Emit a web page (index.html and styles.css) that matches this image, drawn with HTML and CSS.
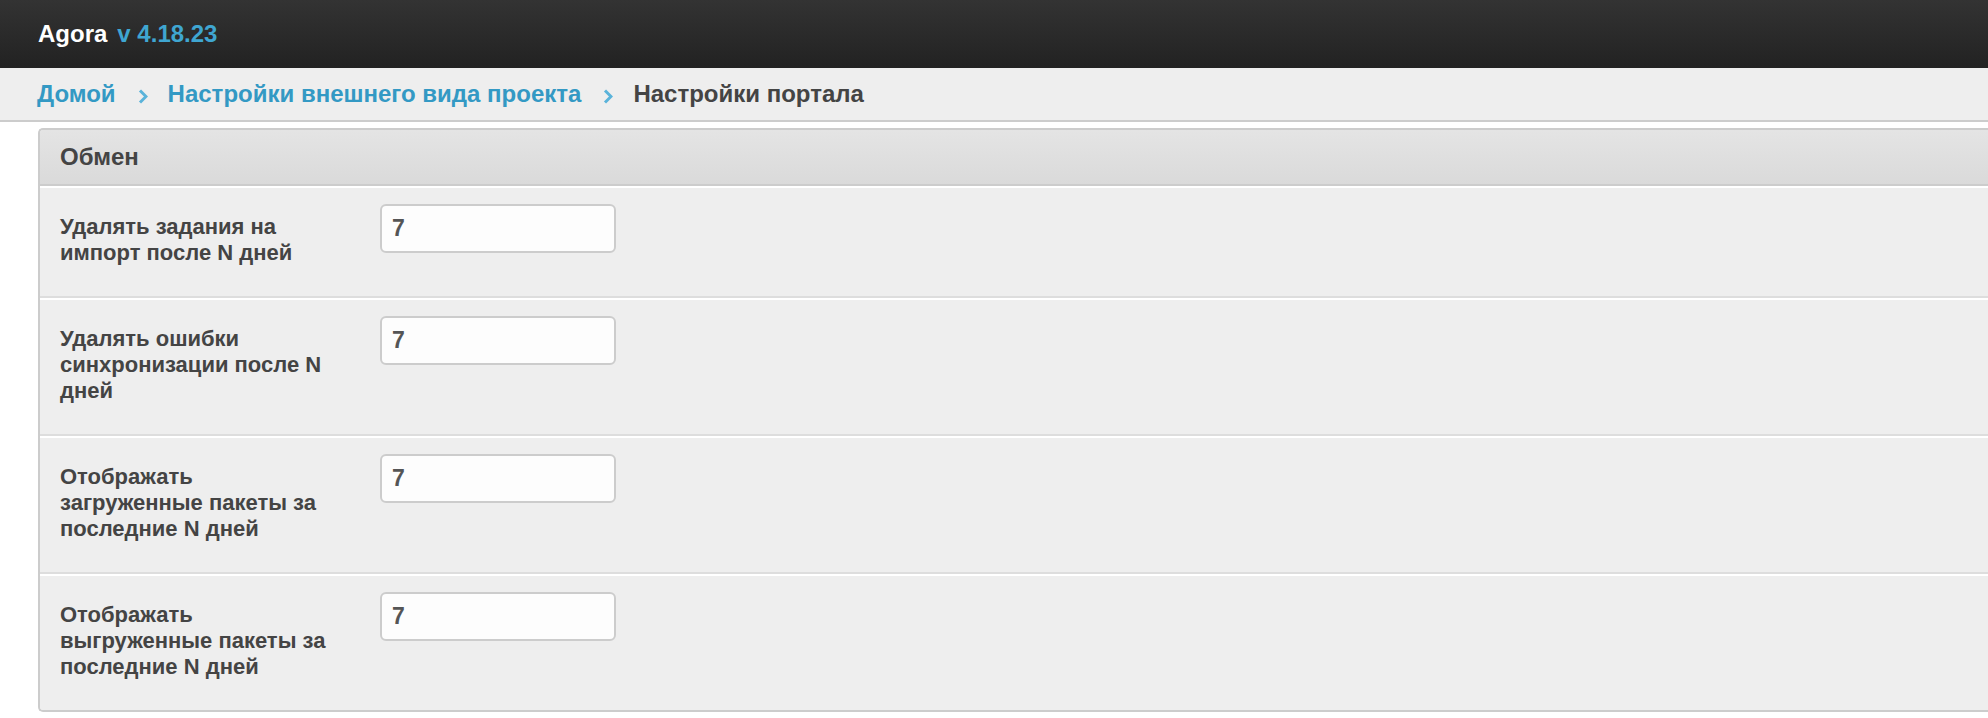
FILE: index.html
```html
<!DOCTYPE html>
<html lang="ru">
<head>
<meta charset="utf-8">
<title>Agora</title>
<link rel="stylesheet" href="styles.css">
</head>
<body>
<header class="topbar">
  <span class="brand">Agora</span><span class="version">v 4.18.23</span>
</header>
<nav class="crumbs">
  <a class="crumb-link" href="#">Домой</a>
  <svg class="chev" width="10" height="15" viewBox="0 0 10 15"><polyline points="2,1.5 8,7.5 2,13.5" fill="none" stroke="#5ab3da" stroke-width="3"/></svg>
  <a class="crumb-link" href="#">Настройки внешнего вида проекта</a>
  <svg class="chev" width="10" height="15" viewBox="0 0 10 15"><polyline points="2,1.5 8,7.5 2,13.5" fill="none" stroke="#5ab3da" stroke-width="3"/></svg>
  <span class="crumb-current">Настройки портала</span>
</nav>
<section class="panel">
  <div class="panel-head">Обмен</div>
  <div class="row">
    <label class="label">Удалять задания на импорт после N дней</label>
    <input class="field" type="text" value="7">
  </div>
  <div class="row">
    <label class="label">Удалять ошибки синхронизации после N дней</label>
    <input class="field" type="text" value="7">
  </div>
  <div class="row">
    <label class="label">Отображать загруженные пакеты за последние N дней</label>
    <input class="field" type="text" value="7">
  </div>
  <div class="row last">
    <label class="label">Отображать выгруженные пакеты за последние N дней</label>
    <input class="field" type="text" value="7">
  </div>
</section>
</body>
</html>
```
FILE: styles.css
```css
html, body {
  margin: 0;
  padding: 0;
  background: #fff;
  overflow: hidden;
}
body {
  font-family: "Liberation Sans", Arial, sans-serif;
  font-weight: bold;
  color: #444;
}
.topbar {
  height: 68px;
  box-sizing: border-box;
  padding-left: 38px;
  display: flex;
  align-items: center;
  background: linear-gradient(#333333, #222222);
  font-size: 24px;
}
.brand {
  color: #fff;
}
.version {
  color: #3fa6d1;
  margin-left: 10px;
}
.crumbs {
  height: 52px;
  box-sizing: content-box;
  background: #eeeeee;
  border-bottom: 2px solid #cccccc;
  padding-left: 37px;
  display: flex;
  align-items: center;
  font-size: 24px;
}
.crumb-link {
  color: #3399c4;
  text-decoration: none;
}
.chev {
  margin: 4px 20px 0 22px;
}
.crumb-current {
  color: #444;
}
.panel {
  margin: 6px -20px 0 38px;
  border: 2px solid #cccccc;
  border-right: none;
  border-radius: 5px 0 0 5px;
  overflow: hidden;
  background: #eeeeee;
}
.panel-head {
  height: 54px;
  padding-left: 20px;
  display: flex;
  align-items: center;
  background: linear-gradient(#e4e4e4, #dadada);
  border-bottom: 2px solid #cccccc;
  font-size: 24px;
  color: #444;
}
.row {
  display: flex;
  align-items: flex-start;
  padding: 16px 0 20px 20px;
  border-top: 2px solid #ffffff;
  border-bottom: 2px solid #dddddd;
  background: #eeeeee;
}
.row.last {
  border-bottom: none;
}
.label {
  flex: 0 0 300px;
  box-sizing: border-box;
  padding: 10px 28px 10px 0;
  font-size: 22px;
  line-height: 26px;
  color: #444;
}
.field {
  margin: 0 0 0 20px;
  width: 236px;
  height: 49px;
  box-sizing: border-box;
  border: 2px solid #cccccc;
  border-radius: 6px;
  background: #fdfdfd;
  padding: 0 10px;
  font-family: "Liberation Sans", Arial, sans-serif;
  font-weight: bold;
  font-size: 23px;
  color: #555;
  outline: none;
}
```
